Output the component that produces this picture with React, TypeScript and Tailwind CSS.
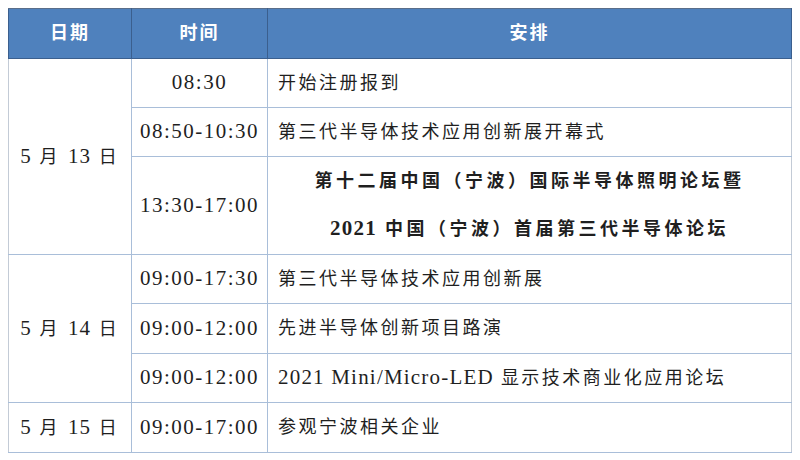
const rows = [
  { date: "5 月 13 日", span: 3, time: "08:30", text: "开始注册报到", h: "h-[49px]" },
  { time: "08:50-10:30", text: "第三代半导体技术应用创新展开幕式", h: "h-[49px]" },
  { time: "13:30-17:00", h: "h-[98px]", highlight: true },
  { date: "5 月 14 日", span: 3, time: "09:00-17:30", text: "第三代半导体技术应用创新展", h: "h-[49px]" },
  { time: "09:00-12:00", text: "先进半导体创新项目路演", h: "h-[50px]" },
  { time: "09:00-12:00", text: "2021 Mini/Micro-LED 显示技术商业化应用论坛", h: "h-[49px]" },
  { date: "5 月 15 日", span: 1, time: "09:00-17:00", text: "参观宁波相关企业", h: "h-[50px]" },
];

// latin runs are set larger so they line up with the CJK glyph size
function Mixed({ text }: { text: string }) {
  const parts = text.split(/([\x21-\x7e][\x20-\x7e]*[\x21-\x7e]|[\x21-\x7e])/);
  return (
    <>
      {parts.map((p, i) =>
        /[\x21-\x7e]/.test(p) ? (
          <span key={i} className="text-[21px] tracking-[1.2px]">
            {p}
          </span>
        ) : (
          <span key={i}>{p}</span>
        )
      )}
    </>
  );
}

function App() {
  return (
    <div className="w-[800px] h-[460px] bg-white pt-[8px] pl-[8px] font-['Liberation_Serif','Noto_Sans_CJK_SC',serif] text-[#1f1f1f]">
      <table className="w-[784px] table-fixed border-collapse border border-[#b9c5d6]">
        <colgroup>
          <col className="w-[123px]" />
          <col className="w-[136px]" />
          <col />
        </colgroup>
        <thead>
          <tr className="h-[50px] bg-[#4f81bd] text-white text-[18px] tracking-[2px]">
            <th className="border border-[#3b5f8e] border-t-[#5a6e8a] font-bold">日期</th>
            <th className="border border-[#3b5f8e] border-t-[#5a6e8a] font-bold">时间</th>
            <th className="border border-[#3b5f8e] border-t-[#5a6e8a] font-bold">安排</th>
          </tr>
        </thead>
        <tbody>
          {rows.map((r, i) => (
            <tr key={i} className={r.h}>
              {r.date && (
                <td
                  rowSpan={r.span}
                  className="border border-[#a9bed9] border-l-[#c3cbd6] text-center text-[18px] tracking-[3px] whitespace-pre"
                >
                  <Mixed text={r.date} />
                </td>
              )}
              <td className="border border-[#a9bed9] text-center text-[21px] tracking-[1.5px]">
                {r.time}
              </td>
              {r.highlight ? (
                <td className="border border-[#a9bed9] border-r-[#c3cbd6] text-center text-[18px] font-bold tracking-[3.5px] leading-[47px]">
                  <div>第十二届中国（宁波）国际半导体照明论坛暨</div>
                  <div>
                    <Mixed text="2021 中国（宁波）首届第三代半导体论坛" />
                  </div>
                </td>
              ) : (
                <td className="border border-[#a9bed9] border-r-[#c3cbd6] pl-[10px] text-[18px] tracking-[2.5px] whitespace-nowrap">
                  <Mixed text={r.text!} />
                </td>
              )}
            </tr>
          ))}
        </tbody>
      </table>
    </div>
  );
}

export default App;
